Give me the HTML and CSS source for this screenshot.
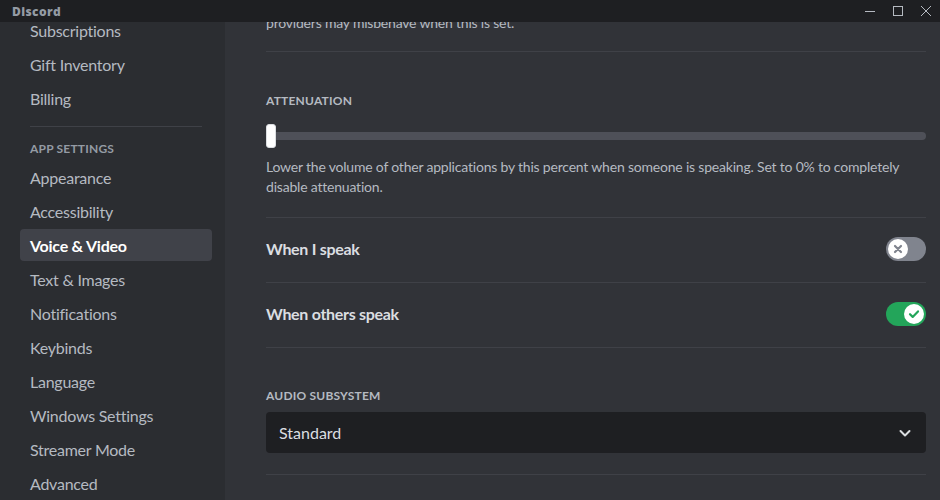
FILE: index.html
```html
<!DOCTYPE html>
<html>
<head>
<meta charset="utf-8">
<link rel="stylesheet" href="styles.css">
</head>
<body>
<div class="app">
  <div class="titlebar">
    <span class="brand">Discord</span>
    <div class="winctl">
      <svg class="wbtn" width="12" height="12" viewBox="0 0 12 12"><path d="M1 6.5h10" stroke="#b5bac1" stroke-width="1"/></svg>
      <svg class="wbtn" width="12" height="12" viewBox="0 0 12 12"><rect x="1.5" y="1.5" width="9" height="9" fill="none" stroke="#b5bac1" stroke-width="1"/></svg>
      <svg class="wbtn" width="12" height="12" viewBox="0 0 12 12"><path d="M1 1l10 10M11 1L1 11" stroke="#b5bac1" stroke-width="1"/></svg>
    </div>
  </div>
  <div class="body">
    <nav class="sidebar">
      <div class="side-inner">
        <div class="item">Subscriptions</div>
        <div class="item">Gift Inventory</div>
        <div class="item">Billing</div>
        <div class="sep"></div>
        <div class="header">App Settings</div>
        <div class="item">Appearance</div>
        <div class="item">Accessibility</div>
        <div class="item selected">Voice &amp; Video</div>
        <div class="item">Text &amp; Images</div>
        <div class="item">Notifications</div>
        <div class="item">Keybinds</div>
        <div class="item">Language</div>
        <div class="item">Windows Settings</div>
        <div class="item">Streamer Mode</div>
        <div class="item">Advanced</div>
      </div>
    </nav>
    <main class="main">
      <div class="content">
        <p class="desc top">providers may misbehave when this is set.</p>
        <div class="divider"></div>
        <h3 class="label first">Attenuation</h3>
        <div class="slider">
          <div class="track"></div>
          <div class="knob"></div>
        </div>
        <p class="desc">Lower the volume of other applications by this percent when someone is speaking. Set to 0% to completely disable attenuation.</p>
        <div class="divider"></div>
        <div class="row">
          <span class="row-title">When I speak</span>
          <div class="toggle off">
            <span class="tknob">
              <svg width="10" height="10" viewBox="0 0 10 10"><path d="M2 2l6 6M8 2L2 8" stroke="#80848e" stroke-width="2.2" stroke-linecap="round"/></svg>
            </span>
          </div>
        </div>
        <div class="divider"></div>
        <div class="row">
          <span class="row-title">When others speak</span>
          <div class="toggle on">
            <span class="tknob">
              <svg width="12" height="10" viewBox="0 0 12 10"><path d="M2 5.2l2.7 2.7L10 2.4" fill="none" stroke="#23a55a" stroke-width="2.2" stroke-linecap="round" stroke-linejoin="round"/></svg>
            </span>
          </div>
        </div>
        <div class="divider"></div>
        <h3 class="label second">Audio Subsystem</h3>
        <div class="select">
          <span>Standard</span>
          <svg width="14" height="14" viewBox="0 0 14 14"><path d="M2.5 5l4.5 4.5L11.5 5" fill="none" stroke="#dbdee1" stroke-width="2" stroke-linecap="round" stroke-linejoin="round"/></svg>
        </div>
        <div class="divider after-select"></div>
      </div>
    </main>
  </div>
</div>
</body>
</html>
```
FILE: styles.css
```css
* { box-sizing: border-box; }
html, body { margin: 0; padding: 0; }
body {
  width: 940px;
  height: 500px;
  overflow: hidden;
  background: #313338;
  font-family: "Lato", "Noto Sans", sans-serif;
}
.app {
  display: flex;
  flex-direction: column;
  height: 500px;
}
.titlebar {
  height: 22px;
  flex: none;
  background: #1e1f22;
  display: flex;
  align-items: center;
  justify-content: space-between;
  padding-left: 12px;
  position: relative;
  z-index: 2;
}
.brand {
  font-family: "Open Sans", "Noto Sans", sans-serif;
  font-weight: 800;
  font-size: 12px;
  color: #949ba4;
  letter-spacing: 0.4px;
}
.winctl {
  display: flex;
  height: 22px;
}
.wbtn {
  width: 28px;
  height: 22px;
  padding: 5px 8px;
  display: block;
}
.body {
  flex: 1;
  display: flex;
  min-height: 0;
}
.sidebar {
  width: 225px;
  flex: none;
  background: #2b2d31;
  overflow: hidden;
}
.side-inner {
  padding: 0 13px 0 20px;
  margin-top: -8px;
}
.item {
  height: 32px;
  margin-bottom: 2px;
  padding: 0 10px;
  display: flex;
  align-items: center;
  font-size: 16px;
  color: #b5bac1;
  border-radius: 4px;
  white-space: nowrap;
  letter-spacing: -0.25px;
}
.item.selected {
  background: #404249;
  color: #ffffff;
  font-weight: 700;
}
.sep {
  height: 1px;
  background: #3f4147;
  margin: 12px 10px 8px;
}
.header {
  padding: 6px 10px 4px;
  font-size: 12px;
  line-height: 16px;
  font-weight: 700;
  text-transform: uppercase;
  color: #949ba4;
  letter-spacing: 0.2px;
}
.main {
  flex: 1;
  overflow: hidden;
  padding: 0 14px 0 41px;
}
.content {
  margin-top: -9px;
}
.desc {
  margin: 0;
  font-size: 14px;
  line-height: 20px;
  color: #b5bac1;
  letter-spacing: -0.2px;
}
.desc.top {
  padding-bottom: 18px;
}
.divider {
  height: 1px;
  background: #3f4147;
}
.label {
  margin: 0;
  font-size: 12px;
  line-height: 16px;
  font-weight: 700;
  text-transform: uppercase;
  color: #b5bac1;
  letter-spacing: 0.2px;
}
.label.first {
  margin-top: 41px;
}
.label.second {
  margin-top: 40px;
  margin-bottom: 8px;
}
.slider {
  position: relative;
  height: 24px;
  margin: 15px 0 9px;
  display: flex;
  align-items: center;
}
.track {
  flex: 1;
  height: 8px;
  background: #4e5058;
  border-radius: 4px;
}
.knob {
  position: absolute;
  left: 0;
  top: 0;
  width: 10px;
  height: 24px;
  background: #ffffff;
  border-radius: 3px;
  border: 1px solid #dbdee1;
}
.slider + .desc {
  margin-bottom: 20px;
}
.row {
  height: 64px;
  display: flex;
  align-items: center;
  justify-content: space-between;
  padding-bottom: 2px;
}
.row-title {
  font-size: 16px;
  font-weight: 700;
  color: #dbdee1;
  letter-spacing: -0.3px;
  margin-bottom: 2px;
}
.toggle {
  width: 40px;
  height: 24px;
  border-radius: 12px;
  display: flex;
  align-items: center;
  padding: 0 2px;
}
.toggle.off {
  background: #80848e;
  justify-content: flex-start;
}
.toggle.on {
  background: #23a55a;
  justify-content: flex-end;
}
.tknob {
  width: 20px;
  height: 20px;
  border-radius: 50%;
  background: #ffffff;
  display: flex;
  align-items: center;
  justify-content: center;
}
.select {
  height: 41px;
  background: #1e1f22;
  border-radius: 4px;
  display: flex;
  align-items: center;
  justify-content: space-between;
  padding: 0 14px 0 13px;
  font-size: 16px;
  color: #dbdee1;
}
.after-select {
  margin-top: 21px;
}
```
